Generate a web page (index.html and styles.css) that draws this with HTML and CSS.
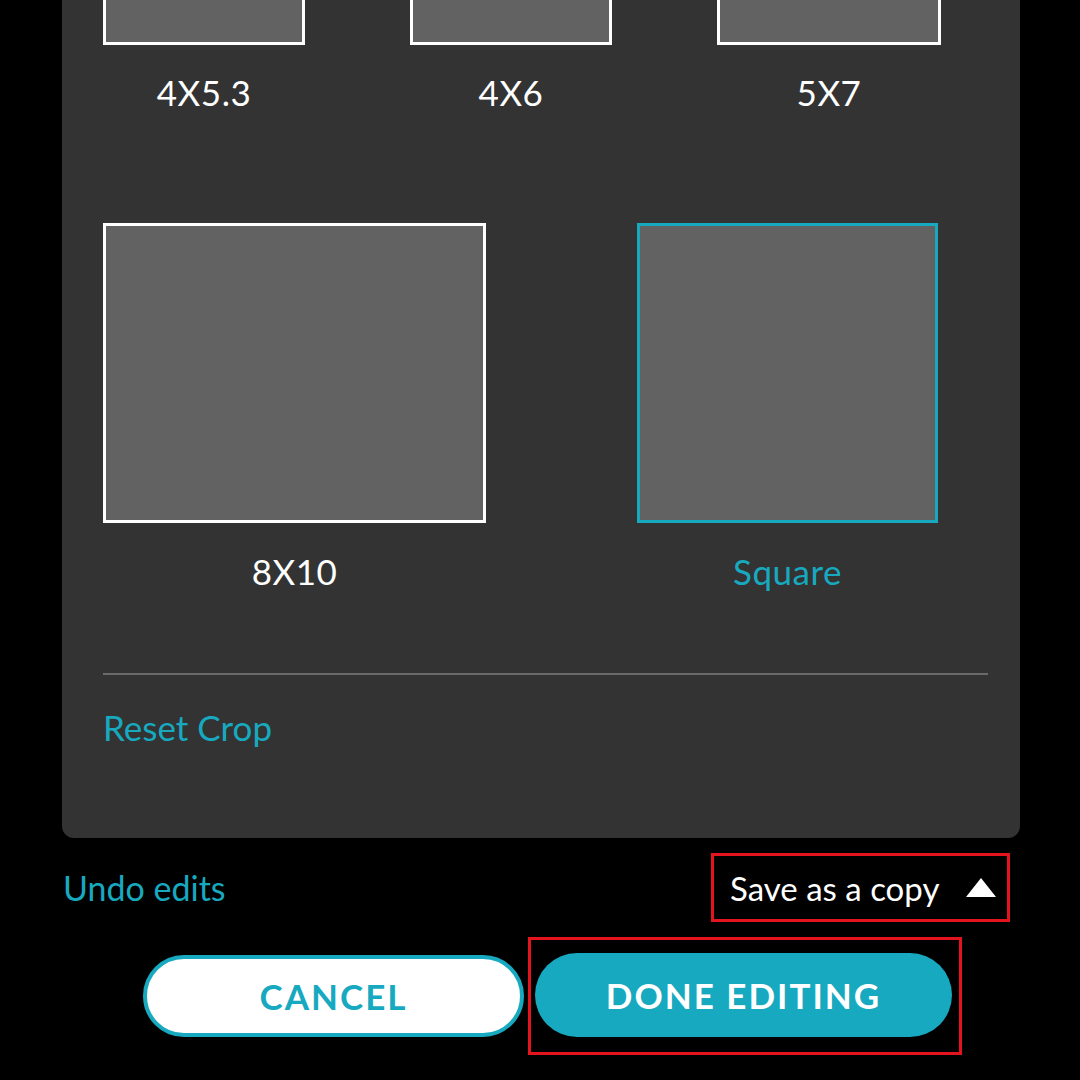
FILE: index.html
```html
<!DOCTYPE html>
<html lang="en">
<head>
    <meta charset="UTF-8">
    <meta name="viewport" content="width=device-width, initial-scale=1.0">
    <title>Crop</title>
    <link rel="stylesheet" href="styles.css">
</head>
<body>
    <div class="panel">
        <div class="size-row top-row">
            <div class="size-option">
                <div class="size-box box-4x53"></div>
                <div class="size-label">4X5.3</div>
            </div>
            <div class="size-option">
                <div class="size-box box-4x6"></div>
                <div class="size-label">4X6</div>
            </div>
            <div class="size-option">
                <div class="size-box box-5x7"></div>
                <div class="size-label">5X7</div>
            </div>
        </div>
        <div class="size-row big-row">
            <div class="size-option">
                <div class="size-box box-8x10"></div>
                <div class="size-label">8X10</div>
            </div>
            <div class="size-option selected">
                <div class="size-box box-square"></div>
                <div class="size-label">Square</div>
            </div>
        </div>
        <div class="divider"></div>
        <div class="reset-link">Reset Crop</div>
    </div>

    <div class="save-row">
        <div class="undo-link">Undo edits</div>
        <div class="highlight save-copy">
            <span>Save as a copy</span>
            <svg class="caret" width="30" height="19" viewBox="0 0 30 19"><polygon points="15,0 30,19 0,19" fill="#fff"/></svg>
        </div>
    </div>

    <div class="button-row">
        <button class="cancel-button">CANCEL</button>
        <div class="highlight done-wrap">
            <button class="done-button">DONE EDITING</button>
        </div>
    </div>
</body>
</html>
```

FILE: styles.css
```css
body {
    margin: 0;
    background: #000;
    font-family: Lato, "Open Sans", sans-serif;
    color: #fff;
    width: 1080px;
    height: 1080px;
    overflow: hidden;
}
.panel {
    background: #333333;
    margin: -145px 0 0 62px;
    width: 958px;
    box-sizing: border-box;
    padding: 40px 32px 91px 41px;
    border-radius: 0 0 12px 12px;
}
.size-row {
    display: flex;
}
.top-row {
    gap: 105px;
}
.big-row {
    margin-top: 111px;
    gap: 151px;
}
.size-option {
    display: flex;
    flex-direction: column;
    align-items: center;
}
.size-box {
    box-sizing: border-box;
    background: #626262;
    border: 3px solid #fff;
}
.box-4x53, .box-4x6 {
    width: 202px;
    height: 150px;
}
.box-5x7 {
    width: 224px;
    height: 150px;
}
.box-8x10 {
    width: 383px;
    height: 300px;
}
.box-square {
    width: 301px;
    height: 300px;
    border-color: #17a9bf;
}
.size-label {
    font-size: 35px;
    line-height: 40px;
    margin-top: 27px;
    letter-spacing: 0.5px;
}
.big-row .size-label {
    margin-top: 28px;
}
.selected .size-label {
    color: #17a9bf;
}
.divider {
    height: 2px;
    background: #6a6a6a;
    margin-top: 82px;
}
.reset-link {
    margin-top: 32px;
    font-size: 35px;
    line-height: 40px;
    color: #17a9bf;
}
.save-row {
    display: flex;
    justify-content: space-between;
    align-items: center;
    margin-top: 15px;
    padding: 0 70px 0 63px;
}
.undo-link {
    font-size: 34px;
    color: #17a9bf;
}
.highlight {
    border: 3px solid #e3141e;
}
.save-copy {
    display: flex;
    align-items: center;
    justify-content: space-between;
    box-sizing: border-box;
    width: 299px;
    height: 69px;
    padding: 0 11px 0 16px;
    font-size: 33px;
}
.button-row {
    display: flex;
    align-items: center;
    margin-top: 15px;
    padding-left: 143px;
    gap: 4px;
}
.cancel-button, .done-button {
    font-family: Lato, "Open Sans", sans-serif;
    font-weight: bold;
    font-size: 35px;
    letter-spacing: 2px;
    border-radius: 42px;
    cursor: pointer;
}
.cancel-button {
    width: 381px;
    height: 82px;
    background: #fff;
    border: 4px solid #17a9bf;
    color: #17a9bf;
}
.done-wrap {
    box-sizing: border-box;
    width: 434px;
    height: 118px;
    padding: 13px 7px 15px 4px;
}
.done-button {
    width: 417px;
    height: 84px;
    border: none;
    background: #17a9bf;
    color: #fff;
}
```
